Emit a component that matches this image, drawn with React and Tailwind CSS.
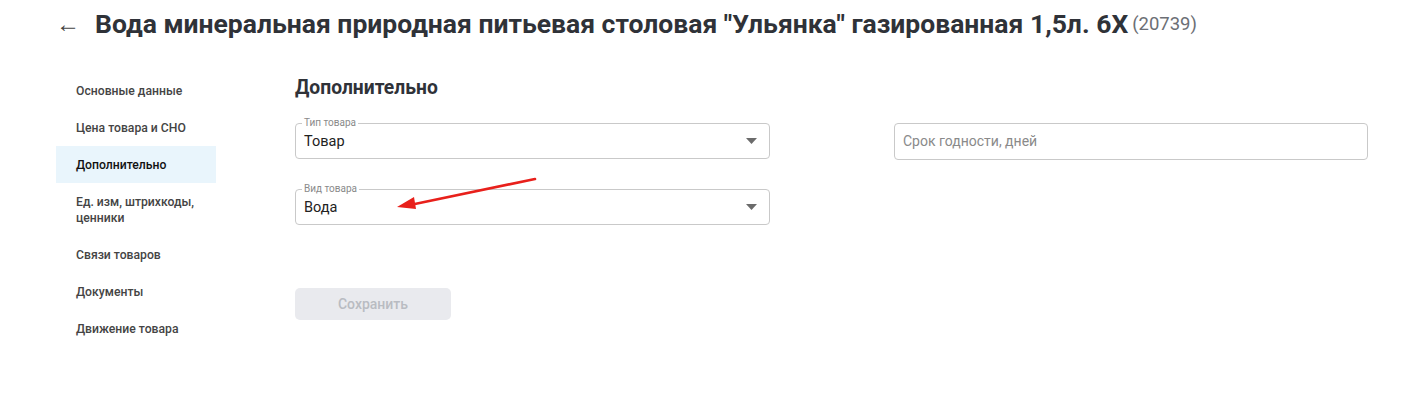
const menu = [
  { label: "Основные данные" },
  { label: "Цена товара и СНО" },
  { label: "Дополнительно", active: true },
  { label: "Ед. изм, штрихкоды,\nценники" },
  { label: "Связи товаров" },
  { label: "Документы" },
  { label: "Движение товара" },
];

const Caret = () => (
  <svg width="11" height="6" viewBox="0 0 11 6" className="shrink-0">
    <path d="M0 0h11L5.5 6z" fill="#6b6b6b" />
  </svg>
);

const SelectField = ({ label, value }) => (
  <div className="relative h-[36px] rounded-[4px] border border-[#c9c9c9] flex items-center pl-2 pr-3">
    <span className="absolute -top-[7px] left-[6px] bg-white px-[2px] text-[10px] leading-[12px] text-[#8a8a8a]">
      {label}
    </span>
    <span className="flex-1 pt-[2px] text-[14.5px] text-[#222]">{value}</span>
    <Caret />
  </div>
);

const App = () => {
  return (
    <div
      className="relative w-[1404px] h-[420px] bg-white overflow-hidden"
      style={{ fontFamily: "Roboto, 'Noto Sans', sans-serif" }}
    >
      <div className="flex items-center h-[48px] pl-[56px]">
        <span className="w-[39px] text-[24px] leading-none text-[#444]">←</span>
        <h1 className="text-[26.5px] font-bold text-[#2f3238]">
          Вода минеральная природная питьевая столовая "Ульянка" газированная 1,5л. 6X
        </h1>
        <span className="ml-[4px] mt-[2px] text-[18.5px] text-[#6c6f75]">(20739)</span>
      </div>

      <div className="flex pt-[24px]">
        <ul className="ml-[56px] w-[160px]">
          {menu.map((m) => (
            <li
              key={m.label}
              className={
                "pl-5 pr-1 py-[10.5px] text-[12.2px] leading-[16px] font-medium whitespace-pre-line " +
                (m.active ? "bg-[#e9f5fc] text-[#111]" : "text-[#444]")
              }
            >
              {m.label}
            </li>
          ))}
        </ul>

        <div className="ml-[79px] flex flex-col">
          <h2 className="text-[19.3px] font-bold text-[#2f3238] leading-[30px] mt-[1px]">Дополнительно</h2>
          <div className="mt-[20px] flex gap-[124px]">
            <div className="w-[475px] flex flex-col gap-[30px]">
              <SelectField label="Тип товара" value="Товар" />
              <SelectField label="Вид товара" value="Вода" />
            </div>
            <div className="w-[474px]">
              <div className="h-[37px] rounded-[4px] border border-[#c9c9c9] flex items-center px-2 text-[14px] text-[#8a8a8a]">
                Срок годности, дней
              </div>
            </div>
          </div>
          <button className="mt-[63px] w-[156px] h-[32px] rounded-[5px] bg-[#e9eaee] text-[14px] font-medium text-[#b9bcc2]">
            Сохранить
          </button>
        </div>
      </div>

      <svg className="absolute left-[390px] top-[172px]" width="152" height="42" viewBox="0 0 152 42">
        <path d="M145 7L20 33" stroke="#e8201b" strokeWidth="2.6" strokeLinecap="round" />
        <path d="M7 35L24 25L26 37z" fill="#e8201b" />
      </svg>
    </div>
  );
};

export default App;
